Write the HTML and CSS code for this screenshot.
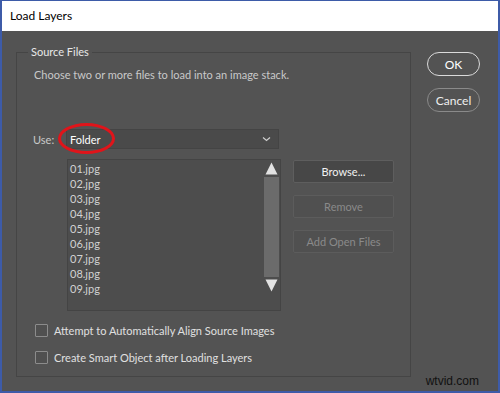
FILE: index.html
```html
<!DOCTYPE html>
<html lang="en">
<head>
    <meta charset="UTF-8">
    <title>Load Layers</title>
    <link rel="stylesheet" href="styles.css">
</head>
<body>
    <div class="window">
        <div class="titlebar">Load Layers</div>
        <div class="content">
            <fieldset class="group">
                <legend>Source Files</legend>
                <p class="hint">Choose two or more files to load into an image stack.</p>
                <div class="use-row">
                    <span class="use-label">Use:</span>
                    <div class="select">
                        <span>Folder</span>
                        <svg class="chev" width="9" height="6" viewBox="0 0 9 6"><path d="M1 1.5 L4.5 4.5 L8 1.5" fill="none" stroke="#cfcfcf" stroke-width="1.2"/></svg>
                    </div>
                    <div class="circle"></div>
                </div>
                <div class="files-row">
                    <div class="list">
                        <ul class="items">
                            <li>01.jpg</li>
                            <li>02.jpg</li>
                            <li>03.jpg</li>
                            <li>04.jpg</li>
                            <li>05.jpg</li>
                            <li>06.jpg</li>
                            <li>07.jpg</li>
                            <li>08.jpg</li>
                            <li>09.jpg</li>
                        </ul>
                        <div class="scroll">
                            <div class="arrow"><svg width="13" height="13" viewBox="0 0 13 13"><path d="M6.5 0.5 L12.5 12.5 L0.5 12.5 Z" fill="#e2e2e2"/></svg></div>
                            <div class="track"></div>
                            <div class="arrow"><svg width="13" height="13" viewBox="0 0 13 13"><path d="M0.5 0.5 L12.5 0.5 L6.5 12.5 Z" fill="#e2e2e2"/></svg></div>
                        </div>
                    </div>
                    <div class="side">
                        <button class="btn">Browse...</button>
                        <button class="btn off">Remove</button>
                        <button class="btn off">Add Open Files</button>
                    </div>
                </div>
                <label class="check"><span class="box"></span>Attempt to Automatically Align Source Images</label>
                <label class="check"><span class="box"></span>Create Smart Object after Loading Layers</label>
            </fieldset>
            <div class="actions">
                <button class="pill main">OK</button>
                <button class="pill">Cancel</button>
            </div>
        </div>
        <div class="mark">wtvid.com</div>
    </div>
</body>
</html>
```

FILE: styles.css
```css
*{
    padding: 0;
    margin: 0;
    box-sizing: border-box;
    list-style: none;
}
html, body{
    width: 500px;
    height: 393px;
    overflow: hidden;
    font-family: Lato, "Noto Sans", sans-serif;
    font-size: 11px;
}
.window{
    position: relative;
    width: 500px;
    height: 393px;
    border: 2px solid #3d5ba8;
    border-top-width: 1px;
    background-color: #535353;
    color: #e6e6e6;
}
.titlebar{
    height: 30px;
    line-height: 30px;
    padding-left: 8px;
    background-color: #fff;
    color: #000;
    font-size: 12px;
}
.content{
    display: flex;
    padding: 13px 0 0 14px;
}
.group{
    width: 395px;
    height: 333px;
    border: 1px solid #454545;
    padding: 0 0 0 17px;
}
.group legend{
    margin-left: -6px;
    padding: 0 3px;
    line-height: 16px;
    color: #e8e8e8;
}
.hint{
    margin-top: 7px;
    line-height: 16px;
    color: #c9c9c9;
}
.use-row{
    position: relative;
    display: flex;
    align-items: center;
    margin-top: 46px;
}
.use-label{
    width: 33px;
    margin-left: -1px;
    color: #c9c9c9;
}
.select{
    display: flex;
    align-items: center;
    justify-content: space-between;
    width: 213px;
    height: 20px;
    padding: 0 7px 0 3px;
    background-color: #4a4a4a;
    border: 1px solid #444;
    color: #fff;
}
.circle{
    position: absolute;
    left: 24px;
    top: -6px;
    width: 57px;
    height: 31px;
    border: 3px solid #e0141a;
    border-radius: 50%;
}
.files-row{
    display: flex;
    align-items: flex-start;
    gap: 12px;
    margin-top: 10px;
    margin-left: 33px;
}
.list{
    display: flex;
    align-items: flex-start;
    width: 214px;
    height: 152px;
    border: 1px solid #444;
    background-color: #4d4d4d;
}
.items{
    flex: 1;
    padding: 1px 0 0 2px;
    color: #d2d2d2;
}
.items li{
    line-height: 15px;
}
.scroll{
    display: flex;
    flex-direction: column;
    width: 15px;
    height: 134px;
    margin-right: 1px;
}
.arrow{
    display: flex;
    justify-content: center;
    align-items: center;
    height: 17px;
}
.track{
    flex: 1;
    background-color: #6b6b6b;
}
.side{
    display: flex;
    flex-direction: column;
    gap: 12px;
    margin-top: 1px;
}
.btn{
    width: 101px;
    height: 23px;
    font: inherit;
    color: #f2f2f2;
    background-color: #474747;
    border: 1px solid #5e5e5e;
    border-radius: 2px;
}
.btn.off{
    color: #8a8a8a;
    background-color: #505050;
    border-color: #5c5c5c;
}
.check{
    display: flex;
    align-items: center;
    gap: 6px;
    height: 16px;
    margin-top: 11px;
    margin-left: 1px;
    color: #e0e0e0;
}
.check + .check{
    margin-top: 11px;
}
.box{
    width: 13px;
    height: 13px;
    border: 1px solid #8c8c8c;
    border-radius: 1px;
    background-color: #505050;
}
.actions{
    display: flex;
    flex-direction: column;
    gap: 12px;
    margin-left: 16px;
    padding-top: 8px;
}
.pill{
    width: 53px;
    height: 24px;
    font: inherit;
    font-size: 12px;
    color: #eee;
    background: transparent;
    border: 1px solid #8a8a8a;
    border-radius: 12px;
}
.pill.main{
    border: 1.5px solid #dadada;
    color: #fff;
}
.mark{
    position: absolute;
    right: 19px;
    bottom: 3px;
    font-family: "Liberation Sans", sans-serif;
    font-size: 12px;
    color: #111;
}
```
